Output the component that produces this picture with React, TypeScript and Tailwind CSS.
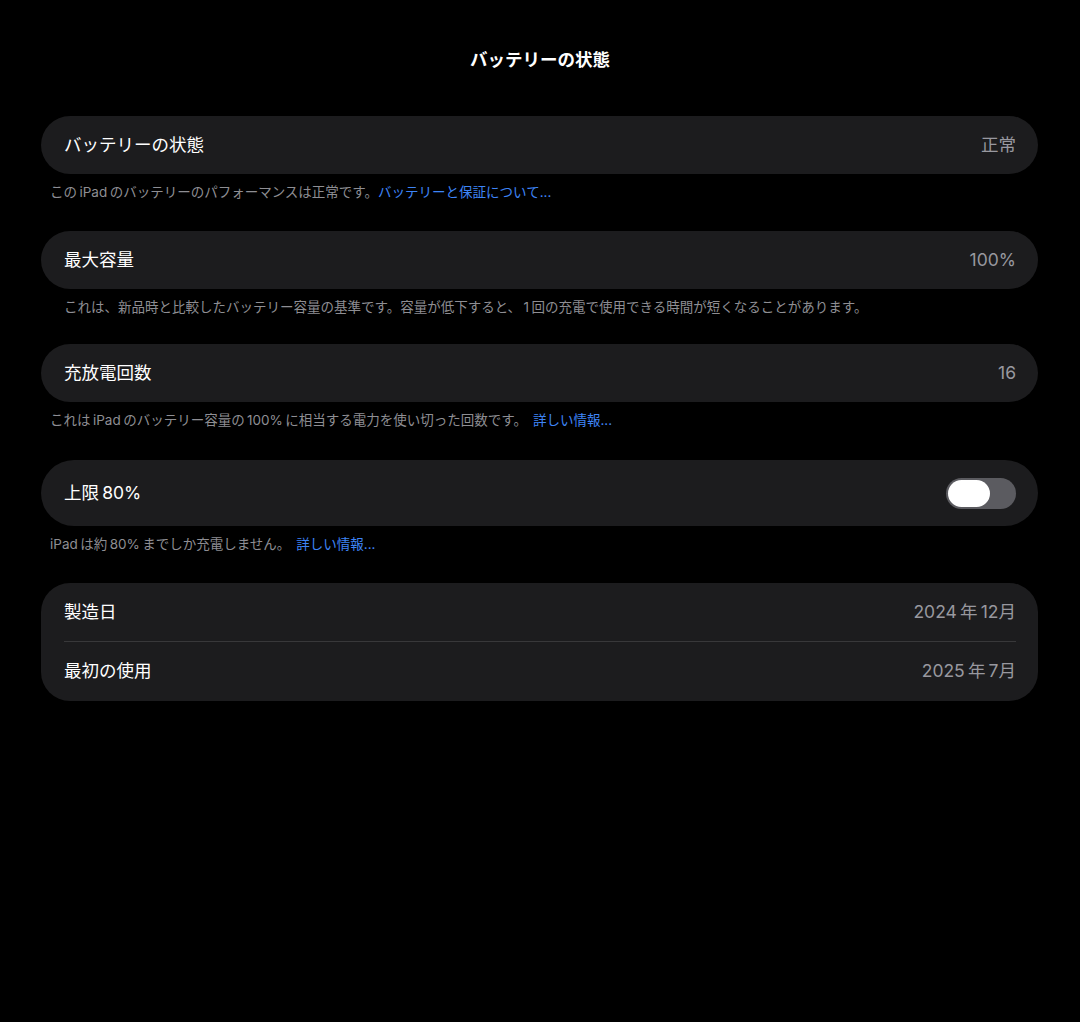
const font = "font-['Inter','Noto_Sans_CJK_JP',sans-serif]"
const sp = '\u2009'

function Row({ label, value }: { label: string; value: string }) {
  return (
    <div className="flex h-[58px] items-center justify-between rounded-[29px] bg-[#1c1c1e] pl-[23px] pr-[22px]">
      <span className="text-[17.5px] text-white">{label}</span>
      <span className="text-[17.5px] text-[#98989f]">{value}</span>
    </div>
  )
}

function Footer({ children, indent = false }: { children: React.ReactNode; indent?: boolean }) {
  return (
    <p
      className={`mt-[9px] h-[18px] whitespace-nowrap text-[13.5px] leading-[18px] text-[#8e8e93] ${indent ? 'pl-[23px]' : 'pl-[9px]'}`}
    >
      {children}
    </p>
  )
}

export default function App() {
  return (
    <div className={`min-h-[1022px] w-[1080px] bg-black ${font}`}>
      <h1 className="pt-[49px] text-center text-[17.5px] font-semibold leading-[22px] text-white">
        バッテリーの状態
      </h1>

      <div className="mx-[41px] mt-[45px] w-[997px]">
        {/* battery health */}
        <Row label="バッテリーの状態" value="正常" />
        <Footer>
          {`この${sp}iPad${sp}のバッテリーのパフォーマンスは正常です。`}
          <span className="text-[#3e84f6]">バッテリーと保証について...</span>
        </Footer>

        {/* max capacity */}
        <div className="mt-[30px]">
          <Row label="最大容量" value="100%" />
        </div>
        <Footer indent>
          {`これは、新品時と比較したバッテリー容量の基準です。容量が低下すると、${sp}1${sp}回の充電で使用できる時間が短くなることがあります。`}
        </Footer>

        {/* cycle count */}
        <div className="mt-[28px]">
          <Row label="充放電回数" value="16" />
        </div>
        <Footer>
          {`これは${sp}iPad${sp}のバッテリー容量の${sp}100%${sp}に相当する電力を使い切った回数です。`}
          <span className="ml-[6px] text-[#3e84f6]">詳しい情報...</span>
        </Footer>

        {/* 80% limit */}
        <div className="mt-[31px] flex h-[66px] items-center justify-between rounded-[33px] bg-[#1c1c1e] pl-[23px] pr-[22px]">
          <span className="text-[17.5px] text-white">{`上限${sp}80%`}</span>
          <div className="flex h-[31px] w-[70px] items-center rounded-full bg-[#5b5b60] px-[2px]">
            <div className="h-[27px] w-[42px] rounded-full bg-white" />
          </div>
        </div>
        <Footer>
          {`iPad${sp}は約${sp}80%${sp}までしか充電しません。`}
          <span className="ml-[6px] text-[#3e84f6]">詳しい情報...</span>
        </Footer>

        {/* dates */}
        <div className="mt-[30px] rounded-[29px] bg-[#1c1c1e]">
          <div className="flex h-[58px] items-center justify-between pl-[23px] pr-[22px]">
            <span className="text-[17.5px] text-white">製造日</span>
            <span className="text-[17.5px] text-[#98989f]">{`2024${sp}年${sp}12月`}</span>
          </div>
          <div className="ml-[23px] mr-[22px] h-px bg-[#38383a]" />
          <div className="flex h-[59px] items-center justify-between pl-[23px] pr-[22px]">
            <span className="text-[17.5px] text-white">最初の使用</span>
            <span className="text-[17.5px] text-[#98989f]">{`2025${sp}年${sp}7月`}</span>
          </div>
        </div>
      </div>
    </div>
  )
}
